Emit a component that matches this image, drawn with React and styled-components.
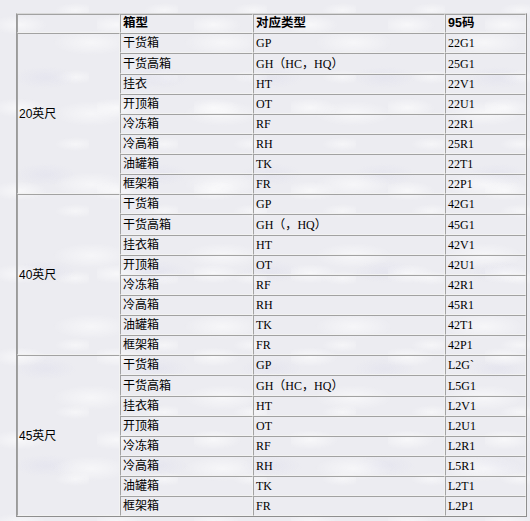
import React from "react";
import styled, { createGlobalStyle } from "styled-components";

const Global = createGlobalStyle`
  html, body {
    margin: 0;
    padding: 0;
  }
  body {
    background-color: #ececf1;
    background-image:
      radial-gradient(ellipse 40px 14px at 20% 30%, rgba(255,255,255,0.6), transparent 70%),
      radial-gradient(ellipse 55px 18px at 70% 60%, rgba(255,255,255,0.55), transparent 70%),
      radial-gradient(ellipse 45px 16px at 40% 80%, rgba(222,222,236,0.45), transparent 70%),
      radial-gradient(ellipse 30px 10px at 85% 15%, rgba(255,255,255,0.5), transparent 70%);
    background-size: 97px 83px, 131px 71px, 113px 97px, 89px 67px;
    font-family: "Noto Sans CJK SC", sans-serif;
    color: #000;
  }
`;

const Page = styled.div`
  padding: 13px 0 0 16px;
  width: 530px;
  height: 521px;
  box-sizing: border-box;
`;

const Table = styled.table`
  width: 509px;
  table-layout: fixed;
  border-collapse: separate;
  border-spacing: 0;
  border: 1px solid;
  border-color: #d8d8d8 #8e8e8e #8e8e8e #9a9a9a;
`;

const Col = styled.col`
  width: ${(p) => p.$w}px;
`;

const Cell = styled.td`
  height: ${(p) => (p.$head ? 17 : 18)}px;
  padding: 0 2px;
  line-height: ${(p) => (p.$head ? 17 : 18)}px;
  border: 1px solid;
  border-color: #a2a2a2 #f2f2f2 #f2f2f2 #a2a2a2;
  font-size: 12px;
  white-space: nowrap;
  vertical-align: middle;
  font-family: ${(p) =>
    p.$mono
      ? `"Liberation Serif", "Noto Sans CJK SC", serif`
      : `"Liberation Sans", "Noto Sans CJK SC", sans-serif`};
`;

const HeadCell = styled(Cell).attrs({ as: "th", $head: true })`
  font-weight: bold;
  text-align: left;
  font-size: 12.5px;
  font-family: "Liberation Sans", "Noto Sans CJK SC", sans-serif;
`;

const SizeCell = styled(Cell)`
  padding-left: 1px;
`;

const Wide = styled.span`
  font-family: "Noto Sans CJK SC", sans-serif;
  letter-spacing: 0;
`;

const typeNames = ["干货箱", "干货高箱", "挂衣箱", "开顶箱", "冷冻箱", "冷高箱", "油罐箱", "框架箱"];
const typeKinds = ["GP", "GH（HC，HQ）", "HT", "OT", "RF", "RH", "TK", "FR"];

const groups = [
  {
    size: "20英尺",
    names: ["干货箱", "干货高箱", "挂衣", "开顶箱", "冷冻箱", "冷高箱", "油罐箱", "框架箱"],
    kinds: typeKinds,
    codes: ["22G1", "25G1", "22V1", "22U1", "22R1", "25R1", "22T1", "22P1"],
  },
  {
    size: "40英尺",
    names: typeNames,
    kinds: ["GP", "GH（，HQ）", "HT", "OT", "RF", "RH", "TK", "FR"],
    codes: ["42G1", "45G1", "42V1", "42U1", "42R1", "45R1", "42T1", "42P1"],
  },
  {
    size: "45英尺",
    names: typeNames,
    kinds: typeKinds,
    codes: ["L2G`", "L5G1", "L2V1", "L2U1", "L2R1", "L5R1", "L2T1", "L2P1"],
  },
];

function Kind({ text }) {
  const parts = text.split(/([（），])/);
  return parts.map((p, i) =>
    /[（），]/.test(p) ? <Wide key={i}>{p}</Wide> : <React.Fragment key={i}>{p}</React.Fragment>
  );
}

export default function App() {
  return (
    <Page>
      <Global />
      <Table>
        <colgroup>
          <Col $w={103} />
          <Col $w={133} />
          <Col $w={192} />
          <Col $w={81} />
        </colgroup>
        <tbody>
          <tr>
            <HeadCell>&nbsp;</HeadCell>
            <HeadCell>箱型</HeadCell>
            <HeadCell>对应类型</HeadCell>
            <HeadCell>95码</HeadCell>
          </tr>
          {groups.map((g) =>
            g.names.map((name, i) => (
              <tr key={g.size + i}>
                {i === 0 && <SizeCell rowSpan={8}>{g.size}</SizeCell>}
                <Cell>{name}</Cell>
                <Cell $mono>
                  <Kind text={g.kinds[i]} />
                </Cell>
                <Cell $mono>{g.codes[i]}</Cell>
              </tr>
            ))
          )}
        </tbody>
      </Table>
    </Page>
  );
}
